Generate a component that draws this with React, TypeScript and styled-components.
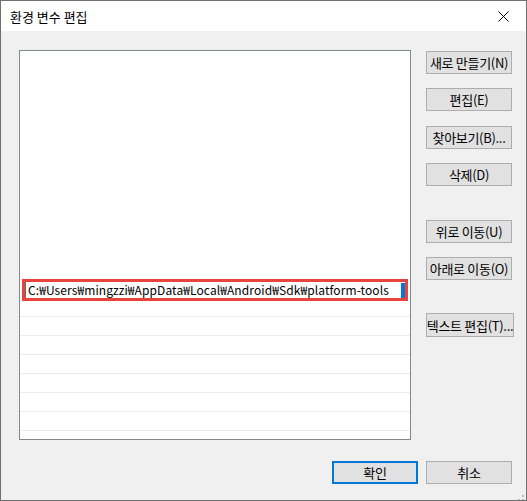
import React from "react";
import styled, { createGlobalStyle } from "styled-components";

const Global = createGlobalStyle`
  html, body { margin: 0; padding: 0; background: #ffffff; }
  body { font-family: "Noto Sans CJK KR", "Noto Sans", sans-serif; }
  * { box-sizing: border-box; }
`;

const Window = styled.div`
  width: 527px;
  height: 501px;
  border: 1px solid #6f6f6f;
  background: #f0f0f0;
  display: flex;
  flex-direction: column;
  position: relative;
  overflow: hidden;
`;

const TitleBar = styled.div`
  height: 30px;
  background: #ffffff;
  display: flex;
  align-items: center;
  justify-content: space-between;
  padding: 0 0 0 9px;
  flex-shrink: 0;
`;

const Title = styled.span`
  font-size: 13px;
  color: #000;
  line-height: 1;
  margin-top: 1px;
`;

const CloseBox = styled.div`
  width: 46px;
  height: 30px;
  display: flex;
  align-items: center;
  justify-content: center;
`;

const Body = styled.div`
  display: flex;
  padding: 19px 0 0 18px;
  gap: 15px;
`;

const ListBox = styled.div`
  width: 392px;
  height: 390px;
  border: 1px solid #828790;
  background: #ffffff;
  display: flex;
  flex-direction: column;
  overflow: hidden;
`;

const Row = styled.div<{ $line?: boolean }>`
  height: 19px;
  flex-shrink: 0;
  border-bottom: 1px solid ${(p) => (p.$line ? "#ececec" : "transparent")};
`;

const EditRow = styled.div`
  height: 38px;
  flex-shrink: 0;
  position: relative;
  border-bottom: 1px solid #ececec;
`;

const EditFrame = styled.div`
  position: absolute;
  left: 2px;
  top: 0;
  width: 386px;
  height: 22px;
  border: 3px solid #e8433c;
  background: #ffffff;
  display: flex;
  align-items: center;
`;

const EditInner = styled.div`
  flex: 1;
  height: 16px;
  border-left: 1px solid #6a6a6a;
  display: flex;
  align-items: center;
  padding-left: 2px;
  font-family: "Noto Sans CJK KR", sans-serif;
  font-size: 12px;
  letter-spacing: 0.09px;
  color: #000;
  white-space: nowrap;
  overflow: hidden;
  line-height: 1;
`;

const Caret = styled.div`
  width: 4px;
  height: 15px;
  background: #0078d7;
  flex-shrink: 0;
`;

const ButtonCol = styled.div`
  display: flex;
  flex-direction: column;
  padding-top: 1px;
`;

const Btn = styled.div<{ $mt?: number; $w?: number; $h?: number; $primary?: boolean }>`
  width: ${(p) => p.$w ?? 86}px;
  height: ${(p) => p.$h ?? 23}px;
  margin-top: ${(p) => p.$mt ?? 0}px;
  background: #e1e1e1;
  border: ${(p) => (p.$primary ? "2px solid #0078d7" : "1px solid #adadad")};
  display: flex;
  align-items: center;
  justify-content: center;
  font-size: 13px;
  color: #000;
  white-space: nowrap;
  letter-spacing: -0.3px;
  line-height: 1;
`;

const Footer = styled.div`
  display: flex;
  justify-content: flex-end;
  gap: 8px;
  padding: 21px 14px 0 0;
`;

const Grip = styled.div`
  position: absolute;
  right: 1px;
  bottom: 1px;
  width: 12px;
  height: 12px;
`;

const rowsAbove = Array.from({ length: 12 });
const rowsBelow = Array.from({ length: 6 });

export default function App() {
  return (
    <>
      <Global />
      <Window>
        <TitleBar>
          <Title>환경 변수 편집</Title>
          <CloseBox>
            <svg width="11" height="11" viewBox="0 0 11 11">
              <path d="M0.5 0.5 L10.5 10.5 M10.5 0.5 L0.5 10.5" stroke="#000" strokeWidth="1" fill="none" />
            </svg>
          </CloseBox>
        </TitleBar>
        <Body>
          <ListBox>
            {rowsAbove.map((_, i) => (
              <Row key={i} />
            ))}
            <EditRow>
              <EditFrame>
                <EditInner>C:₩Users₩mingzzi₩AppData₩Local₩Android₩Sdk₩platform-tools</EditInner>
                <Caret />
              </EditFrame>
            </EditRow>
            {rowsBelow.map((_, i) => (
              <Row key={i} $line />
            ))}
          </ListBox>
          <ButtonCol>
            <Btn>새로 만들기(N)</Btn>
            <Btn $mt={14}>편집(E)</Btn>
            <Btn $mt={15}>찾아보기(B)...</Btn>
            <Btn $mt={14}>삭제(D)</Btn>
            <Btn $mt={34}>위로 이동(U)</Btn>
            <Btn $mt={14}>아래로 이동(O)</Btn>
            <Btn $mt={33} $w={88} $h={24}>텍스트 편집(T)...</Btn>
          </ButtonCol>
        </Body>
        <Footer>
          <Btn $primary>확인</Btn>
          <Btn>취소</Btn>
        </Footer>
        <Grip>
          <svg width="12" height="12" viewBox="0 0 12 12">
            {[
              [9, 1], [9, 5], [5, 5], [9, 9], [5, 9], [1, 9],
            ].map(([x, y], i) => (
              <rect key={i} x={x} y={y} width="2" height="2" fill="#bcbcbc" />
            ))}
          </svg>
        </Grip>
      </Window>
    </>
  );
}
